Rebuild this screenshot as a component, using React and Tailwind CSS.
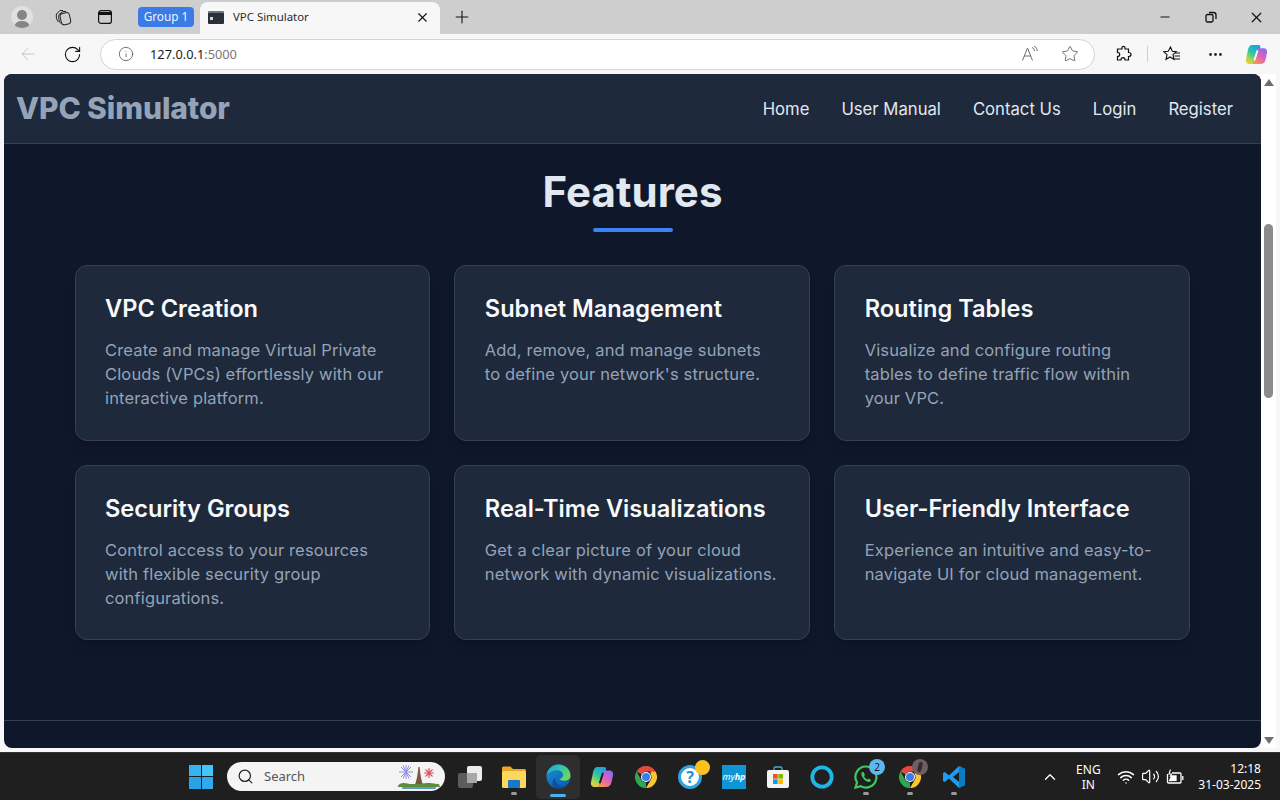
import React from 'react';
import { ArrowLeft, RotateCw, Info, Star, Plus, X, Minus, Search, ChevronUp, Wifi, Volume2, MoreHorizontal } from 'lucide-react';

const features = [
  { title: 'VPC Creation', text: ['Create and manage Virtual Private', 'Clouds (VPCs) effortlessly with our', 'interactive platform.'] },
  { title: 'Subnet Management', text: ['Add, remove, and manage subnets', "to define your network's structure."] },
  { title: 'Routing Tables', text: ['Visualize and configure routing', 'tables to define traffic flow within', 'your VPC.'] },
  { title: 'Security Groups', text: ['Control access to your resources', 'with flexible security group', 'configurations.'] },
  { title: 'Real-Time Visualizations', text: ['Get a clear picture of your cloud', 'network with dynamic visualizations.'] },
  { title: 'User-Friendly Interface', text: ['Experience an intuitive and easy-to-', 'navigate UI for cloud management.'] },
];

const navLinks = ['Home', 'User Manual', 'Contact Us', 'Login', 'Register'];

const CopilotIcon = ({ size = 24, id = 'cp', slit = '#1f1f1f' }) => (
  <svg width={size} height={size} viewBox="0 0 24 24">
    <defs>
      <linearGradient id={`${id}A`} x1="0.7" y1="0" x2="0.2" y2="1">
        <stop offset="0" stopColor="#1c9fe6" />
        <stop offset="0.45" stopColor="#2fc7a0" />
        <stop offset="0.8" stopColor="#b5d84a" />
        <stop offset="1" stopColor="#f5c83c" />
      </linearGradient>
      <linearGradient id={`${id}B`} x1="0.8" y1="0" x2="0.2" y2="1">
        <stop offset="0" stopColor="#8a6cf0" />
        <stop offset="0.5" stopColor="#e05fc0" />
        <stop offset="1" stopColor="#f79a4a" />
      </linearGradient>
    </defs>
    <path d="M7.500 2H14c1.800 0 2.500 1.200 2 2.800L11.500 19c-.7 2.200-2 3-4 3H5C2 22 .4 20 1 17.200L3 7.500C3.700 4 5 2 7.500 2z" fill={`url(#${id}A)`} />
    <path d="M14.500 5.500H19c3 0 4.600 2 4 4.800l-1.500 7C20.800 20.500 19 22 16 22H10c-1.500 0-2-1-1.600-2.200L13 7c.2-.8.700-1.500 1.500-1.500z" fill={`url(#${id}B)`} />
    <path d="M12.800 8.500L10 17.500" stroke={slit} strokeWidth="2" strokeLinecap="round" />
  </svg>
);

const ChromeIcon = () => (
  <svg width="24" height="24" viewBox="0 0 24 24">
    <path d="M12 1a11 11 0 0 1 9.530 5.500H12a5.500 5.500 0 0 0-4.760 2.750L2.470 6.500A11 11 0 0 1 12 1z" fill="#e6483d" />
    <path d="M21.530 6.500A11 11 0 0 1 12 23l4.760-8.250A5.500 5.500 0 0 0 16.760 9.250L16.500 6.500z" fill="#fbc62e" />
    <path d="M12 23A11 11 0 0 1 2.470 6.500l4.770 8.250A5.500 5.500 0 0 0 12 17.500z" fill="#2fa84f" />
    <circle cx="12" cy="12" r="5" fill="#fff" />
    <circle cx="12" cy="12" r="4" fill="#3b7de8" />
  </svg>
);

const EdgeIcon = () => (
  <svg width="25" height="25" viewBox="0 0 24 24">
    <defs>
      <linearGradient id="edgeG" x1="0" y1="0" x2="1" y2="0.800">
        <stop offset="0" stopColor="#1f9fd8" />
        <stop offset="0.5" stopColor="#35c6a8" />
        <stop offset="1" stopColor="#7bd94a" />
      </linearGradient>
      <linearGradient id="edgeB" x1="0" y1="0" x2="0.700" y2="1">
        <stop offset="0" stopColor="#1b8fd8" />
        <stop offset="1" stopColor="#0b5fb0" />
      </linearGradient>
    </defs>
    <circle cx="12" cy="12" r="11.500" fill="url(#edgeB)" />
    <path d="M.6 11C1.500 5 6 .5 12 .5c6.500 0 11.500 5 11.500 10.500 0 3.500-3 5-6 5-2.200 0-4.200-.7-4.800-1.600 2.400-.5 3.700-2 3.700-3.600C16.400 8 14 6 11 6 6.800 6 2.800 7.500.6 11z" fill="url(#edgeG)" />
    <path d="M9 13c-1 3.500 1.500 8 7 8 1.500 0 2-.2 2.800-.6-1.500 2-4.300 3.100-6.800 3.100-1.700 0-3-.4-4-1-2-1.500-2.500-4.500-1-7 .6-1 1.300-1.800 2-2.500z" fill="#0e4f9e" />
  </svg>
);

const TaskCell = ({ children, dot, active, dotColor = 'bg-[#9a9a9a]' }) => (
  <div className={`w-[44px] flex items-center justify-center relative ${active ? 'h-[44px] bg-[#2e2e2e] rounded-[5px]' : 'h-[48px]'}`}>
    {children}
    {dot && <span className={`absolute h-[3px] rounded-full ${dotColor} ${active ? 'w-[16px] bottom-[2px]' : 'w-[6px] bottom-[6px]'}`} />}
  </div>
);

const TabBar = () => (
  <div className="h-[34px] bg-[#cecece] flex items-center text-[#111] shrink-0">
    <div className="w-[44px] flex justify-center">
      <div className="w-[22px] h-[22px] rounded-full bg-[#e0e0e0] flex flex-col items-center justify-end overflow-hidden">
        <div className="w-[10px] h-[10px] rounded-full bg-[#858585] mb-[1px]" />
        <div className="w-[16px] h-[7px] rounded-t-full bg-[#858585]" />
      </div>
    </div>
    <div className="w-[37px] flex justify-center">
      <svg width="18" height="18" viewBox="0 0 18 18" fill="none" stroke="#222" strokeWidth="1">
        <rect x="6.500" y="5" width="9.500" height="11.500" rx="3" transform="rotate(-12 11 10)" />
        <path d="M4.500 14C2.500 12 1.800 8.500 2.500 6L6 2.500h3" />
        <path d="M6.700 15.500C4.800 13.500 4.300 9.500 5 6.500l4-3h3" />
      </svg>
    </div>
    <div className="w-[47px] flex justify-center">
      <svg width="16" height="16" viewBox="0 0 16 16" fill="none" stroke="#111" strokeWidth="1.200">
        <rect x="1.600" y="1.600" width="12.800" height="12.800" rx="2.500" />
        <path d="M1.600 4.500h12.800" strokeWidth="3" />
      </svg>
    </div>
    <div className="ml-[10px] w-[56px] h-[20px] rounded-[4px] bg-[#3a7be8] text-[#eef4ff] text-[11.800px] flex items-center justify-center font-['Noto_Sans',sans-serif]">Group 1</div>
    <div className="ml-[6px] w-[240px] h-[32px] mt-[2px] bg-[#f7f7f7] rounded-t-[8px] flex items-center pl-[8px] pr-[10px]">
      <div className="w-[16px] h-[13px] bg-[#2a3038] rounded-[1px] flex items-center pl-[2px] border-t-2 border-[#6b7480] mb-[1px]">
        <span className="w-[3px] h-[3px] bg-[#cfd6df]" />
      </div>
      <span className="ml-[9px] mb-[2px] text-[11.400px] text-[#2b2b2b] font-['Noto_Sans',sans-serif]">VPC Simulator</span>
      <X size={15} strokeWidth={1.700} className="ml-auto mb-[1px] text-[#111]" />
    </div>
    <div className="ml-[12px] w-[20px] flex justify-center">
      <Plus size={20} strokeWidth={1.300} />
    </div>
    <div className="ml-auto flex items-center">
      <div className="w-[46px] flex justify-center"><Minus size={14} strokeWidth={1.800} /></div>
      <div className="w-[46px] flex justify-center">
        <svg width="12" height="12" viewBox="0 0 12 12" fill="none" stroke="#111" strokeWidth="1.300">
          <rect x="1" y="3.500" width="7" height="7.500" rx="1.500" />
          <path d="M4 1.500h4.500a2.500 2.500 0 0 1 2.500 2.500v4" />
        </svg>
      </div>
      <div className="w-[46px] pr-[1px] flex justify-center"><X size={17} strokeWidth={1.700} /></div>
    </div>
  </div>
);

const AddressBar = () => (
  <div className="h-[40px] bg-[#f7f7f7] flex items-center shrink-0 text-[#222]">
    <div className="w-[56px] flex justify-center"><ArrowLeft size={20} strokeWidth={1} className="text-[#bdbdbd]" /></div>
    <div className="w-[32px] flex justify-center"><RotateCw size={19} strokeWidth={1.400} className="text-[#111]" /></div>
    <div className="ml-[12px] w-[995px] h-[31px] rounded-full bg-white border border-[#d4d4d4] flex items-center pl-[17px] pr-[15px]">
      <Info size={16} strokeWidth={1.100} className="text-[#444]" />
      <span className="ml-[16px] mt-[1px] text-[12.800px] text-[#1d1d1d] font-['Noto_Sans',sans-serif]">127.0.0.1<span className="text-[#777]">:5000</span></span>
      <svg className="ml-auto" width="18" height="18" viewBox="0 0 18 18" fill="none" stroke="#6d6d6d" strokeWidth="1">
        <path d="M1.500 15.500L6.500 3l5 12.500M3.200 11h6.600" />
        <path d="M11 2.500c1.500.5 2.500 2 2.500 3.500M13 1c2 1 3.300 3 3.300 5" />
      </svg>
      <Star size={18} strokeWidth={1} className="ml-[22px] text-[#444]" />
    </div>
    <div className="ml-[20px] w-[18px] flex justify-center">
      <svg width="18" height="18" viewBox="0 0 18 18" fill="none" stroke="#111" strokeWidth="1.200">
        <path d="M7 2.500c0-1.500 3-1.500 3 0V4h3.500v3.500c1.800 0 2.500.7 2.500 2s-.7 2-2.500 2V15H10c0-1.600-.7-2.300-2-2.300S6 13.400 6 15H2.500v-3.500C4 11.500 4.700 10.800 4.700 9.500S4 7.500 2.500 7.500V4H7z" />
      </svg>
    </div>
    <div className="ml-[14px] w-px h-[16px] bg-[#cfcfcf]" />
    <div className="ml-[15px] w-[18px] flex justify-center">
      <svg width="18" height="18" viewBox="0 0 18 18" fill="none" stroke="#111" strokeWidth="1.100">
        <path d="M7.500 2l1.800 4.300 4 .4-3.300 3 1 4.600L7 12l-4 2.300 1-4.600-3.300-3 4.500-.4z" />
        <path d="M12 8h5M11.500 11h5.500M11 14h6" />
      </svg>
    </div>
    <div className="ml-[25px] w-[18px] flex justify-center"><MoreHorizontal size={17} /></div>
    <div className="ml-[20px] w-[24px] flex justify-center"><CopilotIcon size={23} id="cpTop" slit="#f7f7f7" /></div>
  </div>
);

const FeatureCard = ({ title, text }) => (
  <div className="bg-[#1e293b] border border-[#334155] rounded-[12px] px-[29.500px] pt-[25px] pb-[29.500px] shadow-lg">
    <h3 className="text-[23.600px] leading-[36px] font-semibold text-[#f8fafc]">{title}</h3>
    <p className="mt-[11px] text-[16.500px] leading-[24px] text-[#94a3b8] tracking-[0.15px]">
      {text.map((line) => (
        <span key={line} className="block whitespace-nowrap">{line}</span>
      ))}
    </p>
  </div>
);

const Page = () => (
  <div className="flex-1 bg-[#0f172a] rounded-[8px] overflow-hidden flex flex-col font-['Inter',sans-serif]">
    <header className="h-[70px] bg-[#1e293b] border-b border-[#334155] flex items-center pl-[12px] pr-[28px] shrink-0">
      <span className="text-[30px] font-extrabold text-[#94a3b8] tracking-[-0.1px]">VPC Simulator</span>
      <nav className="ml-auto mt-[2px] flex items-center gap-[32px]">
        {navLinks.map((link) => (
          <a key={link} className="text-[16.700px] text-[#e2e8f0]">{link}</a>
        ))}
      </nav>
    </header>
    <main className="flex-1 flex flex-col">
      <h2 className="mt-[21px] text-center text-[42px] leading-[54px] font-bold text-[#e2e8f0] tracking-[0.1px]">Features</h2>
      <div className="mt-[9px] mx-auto w-[80px] h-[4px] rounded-full bg-[#3b82f6]" />
      <div className="mt-[33px] ml-[70.500px] mr-[71px] grid grid-cols-3 gap-x-[24px] gap-y-[24px]">
        {features.map((f) => (
          <FeatureCard key={f.title} {...f} />
        ))}
      </div>
      <div className="mt-auto mb-[27px] border-t border-[#334155]" />
    </main>
  </div>
);

const Scrollbar = () => (
  <div className="w-[15px] bg-white flex flex-col items-center shrink-0">
    <div className="mt-[5px] w-0 h-0 border-l-[5px] border-r-[5px] border-b-[7px] border-l-transparent border-r-transparent border-b-[#6f6f6f]" />
    <div className="mt-[138px] w-[9px] h-[174px] rounded-full bg-[#8b8b8b]" />
    <div className="mt-auto mb-[4px] w-0 h-0 border-l-[5px] border-r-[5px] border-t-[7px] border-l-transparent border-r-transparent border-t-[#6f6f6f]" />
  </div>
);

const Taskbar = () => (
  <div className="h-[48px] bg-[#1f1f1f] border-t border-[#333] flex items-center shrink-0 text-white font-['Noto_Sans',sans-serif] pl-[179px]">
    <TaskCell>
      <div className="grid grid-cols-2 gap-[1px] w-[24px] h-[24px]">
        <span className="bg-[#35b4f0]" /><span className="bg-[#45c4f7]" />
        <span className="bg-[#2aa2e6]" /><span className="bg-[#2fa9ee]" />
      </div>
    </TaskCell>
    <div className="ml-[4px] w-[218px] h-[29px] rounded-full bg-[#f4f4f4] flex items-center pl-[10px] text-[#555]">
      <Search size={17} strokeWidth={1.700} className="text-[#222]" />
      <span className="ml-[10px] text-[13px]">Search</span>
      <svg className="ml-auto mr-[4px]" width="44" height="28" viewBox="0 0 44 28">
        <g stroke="#8f8fe0" strokeWidth="1">
          <path d="M9 2v14M2 9h14M4 4l10 10M14 4L4 14M6 2.500l6 13M12 2.500l-6 13" />
        </g>
        <g stroke="#d9545c" strokeWidth="1.200">
          <path d="M32 5v10M27 10h10M28.500 6.500l7 7M35.500 6.500l-7 7" />
        </g>
        <path d="M17 24c2-4 3.500-10 4.400-20h1.200c.9 10 2.400 16 4.400 20h-2.500c-.6-2-1.500-3-2.500-3s-1.900 1-2.500 3z" fill="#76583e" />
        <path d="M1 24c0-3 3-4 6-4s4 1 6 1 5 0 8 0 6-1 9-1 7 .5 12 1l1 3z" fill="#5e8b3c" />
        <rect x="5" y="24" width="34" height="2" rx="1" fill="#5a9cc8" />
      </svg>
    </div>
    <div className="ml-[3px] flex items-center">
      <TaskCell>
        <div className="relative w-[24px] h-[22px]">
          <div className="absolute left-0 bottom-0 w-[15px] h-[15px] rounded-[2px] bg-[#5d5d5d]" />
          <div className="absolute right-0 top-0 w-[15px] h-[15px] rounded-[2px] bg-[#ececec]" />
          <div className="absolute left-[9px] top-[7px] w-[10px] h-[10px] bg-[#a8a8a8]" />
        </div>
      </TaskCell>
      <TaskCell dot>
        <svg width="24" height="24" viewBox="0 0 24 24">
          <path d="M0 3a1.500 1.500 0 0 1 1.500-1.500h7L11 4h11.500A1.500 1.500 0 0 1 24 5.500V7H0z" fill="#eaa823" />
          <rect x="0" y="6" width="24" height="17" rx="1.500" fill="#fbd75b" />
          <rect x="6" y="15" width="12" height="8" rx="1" fill="#1a78c8" />
        </svg>
      </TaskCell>
      <TaskCell active dot dotColor="bg-[#4bb4ec]"><EdgeIcon /></TaskCell>
      <TaskCell><CopilotIcon id="cpBar" /></TaskCell>
      <TaskCell><ChromeIcon /></TaskCell>
      <TaskCell>
        <div className="relative">
          <div className="w-[24px] h-[24px] rounded-full border-[3px] border-[#2ea3df] bg-white flex items-center justify-center text-[#1f8fd0] text-[16px] font-bold">?</div>
          <span className="absolute -top-[5px] -right-[8px] w-[15px] h-[15px] rounded-full bg-[#fcc21b]" />
        </div>
      </TaskCell>
      <TaskCell>
        <div className="w-[24px] h-[24px] bg-[#0f96d2] flex items-center justify-center text-[9px] italic text-white">my<b>hp</b></div>
      </TaskCell>
      <TaskCell>
        <svg width="24" height="24" viewBox="0 0 24 24">
          <path d="M8 6V3.500A1.500 1.500 0 0 1 9.500 2h5A1.500 1.500 0 0 1 16 3.500V6" fill="none" stroke="#4ba8d8" strokeWidth="1.300" />
          <rect x="1" y="5" width="22" height="18" rx="2" fill="#f3f3f3" />
          <rect x="7" y="9" width="4.700" height="4.700" fill="#f25022" />
          <rect x="12.300" y="9" width="4.700" height="4.700" fill="#7fba00" />
          <rect x="7" y="14.300" width="4.700" height="4.700" fill="#00a4ef" />
          <rect x="12.300" y="14.300" width="4.700" height="4.700" fill="#ffb900" />
        </svg>
      </TaskCell>
      <TaskCell>
        <svg width="24" height="24" viewBox="0 0 24 24" fill="none">
          <circle cx="12" cy="12" r="9.700" stroke="#1fb6e8" strokeWidth="3.800" />
          <path d="M4 18l4.500 5 1.500-4z" fill="#1fb6e8" />
        </svg>
      </TaskCell>
      <TaskCell dot>
        <div className="relative">
          <svg width="24" height="24" viewBox="0 0 24 24">
            <path d="M12 1.500a10.500 10.500 0 0 0-9 16L1.500 22.500l5.200-1.400A10.500 10.500 0 1 0 12 1.500z" fill="none" stroke="#3fca5e" strokeWidth="2.200" />
            <path d="M8 7c-1 1-1 3 1 6s4.500 4 6 4c1 0 2-1 2-2l-2.500-1.500-1 1c-1 0-3-2-3.500-3.500l1-1L9.500 7z" fill="#3fca5e" />
          </svg>
          <span className="absolute -top-[6px] -right-[7px] w-[16px] h-[16px] rounded-full bg-[#5cb8ee] text-[#10202c] text-[10px] leading-[16px] text-center">2</span>
        </div>
      </TaskCell>
      <TaskCell dot>
        <div className="relative">
          <ChromeIcon />
          <span className="absolute -top-[6px] -right-[6px] w-[16px] h-[16px] rounded-full bg-[#6e5f62] flex items-center justify-center">
            <span className="w-[4px] h-[10px] rounded-full bg-[#3a2830] rotate-12" />
          </span>
        </div>
      </TaskCell>
      <TaskCell dot>
        <svg width="24" height="24" viewBox="0 0 24 24">
          <path d="M17 1l6 3v16l-6 3L7 13.500 2.800 17 1 16V8l1.800-1L7 10.500z" fill="#1f9cf0" />
          <path d="M17 7l-6 5 6 5z" fill="#1f1f1f" />
          <path d="M17 1l6 3v16l-6 3z" fill="#0b7bc4" />
        </svg>
      </TaskCell>
    </div>
    <div className="ml-auto flex items-center pr-[19px]">
      <ChevronUp size={18} strokeWidth={1.700} />
      <div className="ml-[7px] w-[44px] text-center text-[12px] leading-[15px]">ENG<br />IN</div>
      <Wifi size={18} strokeWidth={2} className="ml-[7px]" />
      <Volume2 size={19} strokeWidth={1.500} className="ml-[6px]" />
      <svg className="ml-[6px]" width="18" height="18" viewBox="0 0 18 18" fill="none" stroke="#fff" strokeWidth="1.300">
        <path d="M6 5h8a1 1 0 0 1 1 1v8a1 1 0 0 1-1 1H2.500a1 1 0 0 1-1-1V6" />
        <path d="M16.800 8v4" />
        <path d="M3 12.500l7-.1V8H5" fill="#fff" />
        <path d="M4.500 1.500L3 6h2.500L4 9" strokeWidth="1.100" />
      </svg>
      <div className="ml-[14px] text-right text-[12px] leading-[16px]">12:18<br />31-03-2025</div>
    </div>
  </div>
);

export default function App() {
  return (
    <div className="w-[1280px] h-[800px] flex flex-col overflow-hidden bg-[#f7f7f7]">
      <TabBar />
      <AddressBar />
      <div className="flex-1 flex min-h-0 pl-[4px] pr-[4px] pb-[4px]">
        <Page />
        <Scrollbar />
      </div>
      <Taskbar />
    </div>
  );
}
